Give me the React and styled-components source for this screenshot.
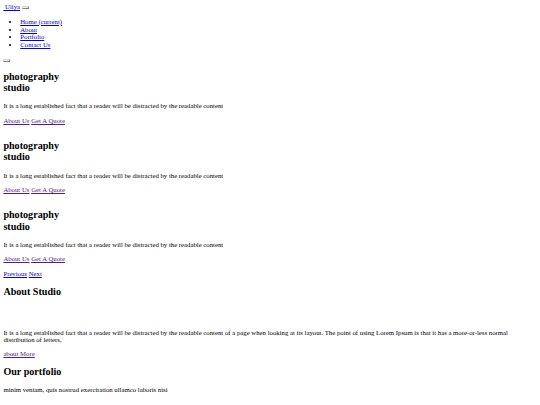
import React from "react";
import styled, { createGlobalStyle } from "styled-components";

// the reference is a 1280px-wide unstyled page shot down to 540px
const SCALE = 540 / 1280;

const Global = createGlobalStyle`
  html, body {
    margin: 0;
    background: #fff;
  }
  body {
    font-family: "Liberation Serif", "Times New Roman", serif;
    font-size: 16px;
    line-height: 1.15;
    color: #000;
  }
`;

const Page = styled.div`
  zoom: ${SCALE};
  padding: 8px;
  width: 1264px;
`;

const Link = styled.a`
  color: ${props => (props.$visited ? "#551a8b" : "#0000ee")};
  text-decoration: underline;
  cursor: pointer;
`;

const Toggler = styled.button`
  display: inline-block;
  padding: 1px 6px;
  border: 2px outset #d6d6d6;
  border-radius: 2px;
  background: #efefef;
  vertical-align: middle;
`;

const Brand = styled.div``;

const Menu = styled.ul`
  margin: 16px 0;
  padding-left: 40px;
  list-style: disc;
`;

const SearchRow = styled.div`
  height: 16px;
`;

const Slide = styled.div`
  display: flow-root;
`;

const Heading = styled.h2`
  font-size: 24px;
  line-height: 1.15;
  font-weight: bold;
  margin: 19.92px 0;
`;

const Text = styled.p`
  margin: 16px 0;
`;

const Actions = styled.div`
  margin-bottom: 16px;
`;

const AboutPicture = styled.div`
  height: 38px;
`;

const AboutText = styled.p`
  margin: 16px 0 14px;
  max-width: 1200px;
`;

const slides = [1, 2, 3];

export default function App() {
  return (
    <Page>
      <Global />
      <header>
        <Brand>
          <Link href="#">&nbsp;Uliya</Link> <Toggler type="button" aria-label="menu" />
        </Brand>
        <Menu>
          <li><Link href="#">Home (current)</Link></li>
          <li><Link href="#">About</Link></li>
          <li><Link href="#">Portfolio</Link></li>
          <li><Link href="#">Contact Us</Link></li>
        </Menu>
        <SearchRow>
          <Toggler type="button" aria-label="search" />
        </SearchRow>
      </header>

      <section>
        {slides.map(n => (
          <Slide key={n}>
            <Heading>
              photography
              <br />
              studio
            </Heading>
            <Text>It is a long established fact that a reader will be distracted by the readable content</Text>
            <Actions>
              <Link $visited href="#">About Us</Link> <Link $visited href="#">Get A Quote</Link>
            </Actions>
          </Slide>
        ))}
        <div>
          <Link href="#">Previous</Link> <Link href="#">Next</Link>
        </div>
      </section>

      <section>
        <Heading>About Studio</Heading>
        <AboutPicture />
        <AboutText>
          It is a long established fact that a reader will be distracted by the readable content of a page when
          looking at its layout. The point of using Lorem Ipsum is that it has a more-or-less normal distribution
          of letters,
        </AboutText>
        <Link $visited href="#">about More</Link>
      </section>

      <section>
        <Heading>Our portfolio</Heading>
        <Text>minim veniam, quis nostrud exercitation ullamco laboris nisi</Text>
      </section>
    </Page>
  );
}
